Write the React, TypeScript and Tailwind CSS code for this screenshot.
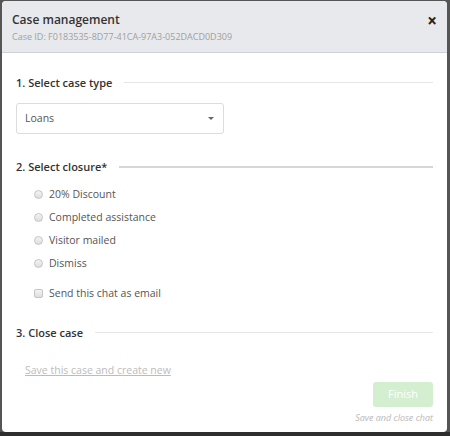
import React from 'react';

const font = { fontFamily: '"Open Sans", "Liberation Sans", sans-serif' };

function SectionTitle({ children, thick }: { children: React.ReactNode; thick?: boolean }) {
  return (
    <div className="flex items-center gap-[12px]">
      <span className="text-[11px] font-semibold text-[#333] leading-none whitespace-nowrap">{children}</span>
      <div className={`flex-1 ${thick ? 'h-[2px] bg-[#d6d6d6]' : 'h-px bg-[#e6e6e6]'}`} />
    </div>
  );
}

function Radio({ label }: { label: string }) {
  return (
    <label className="flex items-center gap-[6px] h-[23px]">
      <span className="w-[9px] h-[9px] rounded-full border border-[#c4c4c4] bg-gradient-to-b from-[#f4f4f4] to-[#dedede]" />
      <span className="text-[10.5px] text-[#555]">{label}</span>
    </label>
  );
}

export default function App() {
  return (
    <div className="w-[450px] h-[436px] bg-[#555] flex flex-col" style={font}>
      <div className="pl-[2px] pr-[3px] pt-[1px]">
        <div className="h-[431px] bg-white rounded-[4px] flex flex-col overflow-hidden">
          {/* header */}
          <div className="h-[52px] bg-[#e8e9ec] border-b border-[#cfd0d3] pl-[10px] pr-[10px] pt-[11px] flex justify-between">
            <div>
              <div className="text-[12px] font-semibold text-[#333] leading-[16px]">Case management</div>
              <div className="text-[9px] text-[#a0a0a0] leading-[12px] mt-[3px]">
                Case ID: F0183535-8D77-41CA-97A3-052DACD0D309
              </div>
            </div>
            <span className="text-[17px] font-bold text-[#222] leading-none">×</span>
          </div>

          {/* body */}
          <div className="flex-1 pl-[14px] pr-[14px] pt-[24px] flex flex-col">
            <SectionTitle>1. Select case type</SectionTitle>

            <div className="mt-[15px] w-[208px] h-[31px] border border-[#dcdcdc] rounded-[3px] flex items-center justify-between pl-[8px] pr-[9px]">
              <span className="text-[10.5px] text-[#555]">Loans</span>
              <span className="w-0 h-0 border-l-[3px] border-r-[3px] border-t-[3px] border-l-transparent border-r-transparent border-t-[#666]" />
            </div>

            <div className="mt-[27px]">
              <SectionTitle thick>2. Select closure*</SectionTitle>
            </div>

            <div className="mt-[11px] pl-[18px] flex flex-col">
              <Radio label="20% Discount" />
              <Radio label="Completed assistance" />
              <Radio label="Visitor mailed" />
              <Radio label="Dismiss" />
              <label className="flex items-center gap-[6px] h-[23px] mt-[7px]">
                <span className="w-[9px] h-[9px] rounded-[2px] border border-[#c4c4c4] bg-gradient-to-b from-[#f4f4f4] to-[#dedede]" />
                <span className="text-[10.5px] text-[#555]">Send this chat as email</span>
              </label>
            </div>

            <div className="mt-[22px]">
              <SectionTitle>3. Close case</SectionTitle>
            </div>

            <a className="mt-[27px] ml-[9px] self-start text-[10.5px] text-[#bcbcbc] underline leading-none">
              Save this case and create new
            </a>

            <div className="mt-[6px] flex flex-col items-end">
              <button className="w-[60px] h-[25px] rounded-[3px] bg-[#d3efd0] text-white text-[11px]">Finish</button>
              <span className="mt-[6px] text-[9px] italic text-[#b8b8b8] leading-none">Save and close chat</span>
            </div>
          </div>
        </div>
      </div>
      <div className="flex-1 bg-[#2e2e2e]" />
    </div>
  );
}
